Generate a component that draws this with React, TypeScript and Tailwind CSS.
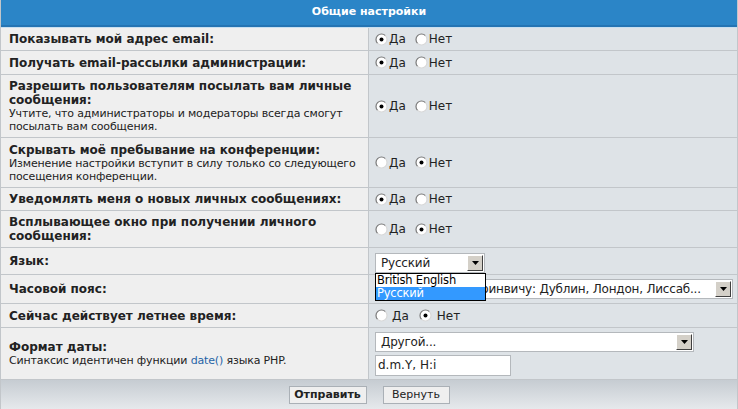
import React from "react";

const font = { fontFamily: '"DejaVu Sans", Verdana, sans-serif' };

function Radio({ checked }: { checked?: boolean }) {
  return (
    <svg width="13" height="13" viewBox="0 0 13 13" className="shrink-0">
      <circle cx="6.5" cy="6.5" r="5.5" fill="#ffffff" />
      <path d="M2.6 10.4 A5.5 5.5 0 0 1 10.4 2.6" stroke="#7a7a7a" strokeWidth="1.2" fill="none" />
      <path d="M10.4 2.6 A5.5 5.5 0 0 1 2.6 10.4" stroke="#d8d8d8" strokeWidth="1.2" fill="none" />
      {checked && <circle cx="6.5" cy="6.5" r="2" fill="#000000" />}
    </svg>
  );
}

function YesNo({ yes, wide }: { yes: boolean; wide?: boolean }) {
  return (
    <div className="flex items-center text-[12px] text-[#222]">
      <Radio checked={yes} />
      <span className={wide ? "ml-[4px]" : "ml-[1px]"}>Да</span>
      <span className={wide ? "ml-[10px]" : "ml-[9px]"}>
        <Radio checked={!yes} />
      </span>
      <span className={wide ? "ml-[5px]" : "ml-[1px]"}>Нет</span>
    </div>
  );
}

function Arrow() {
  return (
    <div className="w-[16px] h-[16px] bg-[#d4d0c8] border border-t-white border-l-white border-r-[#404040] border-b-[#404040] flex items-center justify-center shrink-0">
      <svg width="7" height="4" viewBox="0 0 7 4">
        <path d="M0 0 H7 L3.5 4 Z" fill="#000" />
      </svg>
    </div>
  );
}

function Select({ value, className }: { value: string; className: string }) {
  return (
    <div
      className={`h-[20px] bg-white border border-[#b4b8bc] flex items-center pl-[5px] pr-[1px] text-[12px] text-[#222] ${className}`}
    >
      <span className="flex-1 overflow-hidden whitespace-nowrap tracking-[-0.2px]">{value}</span>
      <Arrow />
    </div>
  );
}

function Row({
  h,
  label,
  desc,
  children,
}: {
  h: string;
  label: React.ReactNode;
  desc?: React.ReactNode;
  children: React.ReactNode;
}) {
  return (
    <div className={`flex border-b border-[#c2c6ca] ${h}`}>
      <div className="w-[368px] shrink-0 bg-[#efefef] border-r border-[#c2c6ca] pl-[8px] flex flex-col justify-center text-[#222] whitespace-nowrap">
        <div className="text-[12px] leading-[14px] font-bold">{label}</div>
        {desc && <div className="text-[11px] leading-[13px] tracking-[-0.15px]">{desc}</div>}
      </div>
      <div className="flex-1 bg-[#dee3e7] pl-[6px] flex flex-col justify-center">{children}</div>
    </div>
  );
}

export default function App() {
  return (
    <div className="w-[738px] h-[409px] overflow-hidden bg-white" style={font}>
      <div className="border-x border-[#c2c6ca]">
        <div className="h-[25px] bg-[#2b85c7] flex items-center justify-center text-white text-[11px] font-bold">
          Общие настройки
        </div>
        <div className="h-[2px] bg-[#2474b3]" />
        <div className="h-[1px] bg-[#c9dff0]" />

        <Row h="h-[23px]" label="Показывать мой адрес email:">
          <YesNo yes />
        </Row>
        <Row h="h-[24px]" label="Получать email-рассылки администрации:">
          <YesNo yes />
        </Row>
        <Row
          h="h-[63px]"
          label={
            <>
              Разрешить пользователям посылать вам личные
              <br />
              сообщения:
            </>
          }
          desc={
            <>
              Учтите, что администраторы и модераторы всегда смогут
              <br />
              посылать вам сообщения.
            </>
          }
        >
          <YesNo yes />
        </Row>
        <Row
          h="h-[50px]"
          label="Скрывать моё пребывание на конференции:"
          desc={
            <>
              Изменение настройки вступит в силу только со следующего
              <br />
              посещения конференции.
            </>
          }
        >
          <YesNo yes={false} />
        </Row>
        <Row h="h-[23px]" label="Уведомлять меня о новых личных сообщениях:">
          <YesNo yes />
        </Row>
        <Row
          h="h-[37px]"
          label={
            <>
              Всплывающее окно при получении личного
              <br />
              сообщения:
            </>
          }
        >
          <YesNo yes={false} />
        </Row>
        <Row h="h-[27px]" label="Язык:">
          <div className="relative">
            <Select value="Русский" className="w-[110px] mt-[3px]" />
            <div className="absolute left-0 top-[23px] w-[111px] border border-black bg-white text-[11.5px] leading-[13px] tracking-[-0.2px] z-10">
              <div className="pl-[1px] text-black">British English</div>
              <div className="pl-[1px] bg-[#3399ff] text-white">Русский</div>
            </div>
          </div>
        </Row>
        <Row h="h-[29px]" label="Часовой пояс:">
          <Select value="GMT, время по Гринвичу: Дублин, Лондон, Лиссаб..." className="w-[358px]" />
        </Row>
        <Row h="h-[24px]" label="Сейчас действует летнее время:">
          <YesNo yes={false} wide />
        </Row>
        <Row
          h="h-[52px]"
          label="Формат даты:"
          desc={
            <>
              Синтаксис идентичен функции <span className="text-[#1f63a6]">date()</span> языка PHP.
            </>
          }
        >
          <Select value="Другой..." className="w-[319px]" />
          <div className="mt-[3px] w-[136px] h-[21px] bg-white border border-[#b4b8bc] flex items-center pl-[2px] text-[12px] text-[#222]">
            d.m.Y, H:i
          </div>
        </Row>

        <div className="h-[29px] bg-gradient-to-b from-[#c6ccd2] to-[#e6e9ec] flex items-center justify-center gap-[16px] pt-[1px]">
          <button className="h-[18px] w-[78px] bg-[#efefef] border border-[#aab0b6] text-[11px] font-bold text-[#222]">
            Отправить
          </button>
          <button className="h-[18px] w-[67px] bg-[#efefef] border border-[#aab0b6] text-[11px] text-[#222]">
            Вернуть
          </button>
        </div>
      </div>
    </div>
  );
}
